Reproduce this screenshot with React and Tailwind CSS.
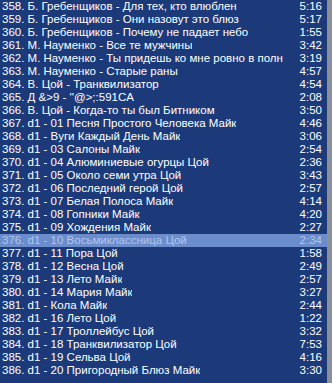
import React from "react";

const tracks = [
  ["358. Б. Гребенщиков - Для тех, кто влюблен", "5:16"],
  ["359. Б. Гребенщиков - Они назовут это блюз", "5:17"],
  ["360. Б. Гребенщиков - Почему не падает небо", "1:55"],
  ["361. М. Науменко - Все те мужчины", "3:42"],
  ["362. М. Науменко - Ты придешь ко мне ровно в полн", "3:19"],
  ["363. М. Науменко - Старые раны", "4:57"],
  ["364. В. Цой - Транквилизатор", "4:54"],
  ["365. Д &>9 - ''@>;:591CA", "2:08"],
  ["366. В. Цой - Когда-то ты был Битником", "3:50"],
  ["367. d1 - 01 Песня Простого Человека Майк", "4:46"],
  ["368. d1 - Вуги Каждый День Майк", "3:06"],
  ["369. d1 - 03 Салоны Майк", "2:54"],
  ["370. d1 - 04 Алюминиевые огурцы Цой", "2:36"],
  ["371. d1 - 05 Около семи утра Цой", "3:43"],
  ["372. d1 - 06 Последний герой Цой", "2:57"],
  ["373. d1 - 07 Белая Полоса Майк", "4:14"],
  ["374. d1 - 08 Гопники Майк", "4:20"],
  ["375. d1 - 09 Хождения Майк", "2:27"],
  ["376. d1 - 10 Восьмиклассница Цой", "2:34"],
  ["377. d1 - 11 Пора Цой", "1:58"],
  ["378. d1 - 12 Весна Цой", "2:49"],
  ["379. d1 - 13 Лето Майк", "2:57"],
  ["380. d1 - 14 Мария Майк", "3:27"],
  ["381. d1 - Кола Майк", "2:44"],
  ["382. d1 - 16 Лето Цой", "1:22"],
  ["383. d1 - 17 Троллейбус Цой", "3:32"],
  ["384. d1 - 18 Транквилизатор Цой", "7:53"],
  ["385. d1 - 19 Сельва Цой", "4:16"],
  ["386. d1 - 20 Пригородный Блюз Майк", "3:30"],
];

const selected = 18;

export default function App() {
  return (
    <div className="flex w-[332px] h-[383px] overflow-hidden bg-[#1c3a7a] font-['Liberation_Sans',Arial,sans-serif] text-[11.5px] leading-[13px]">
      <div className="flex flex-col flex-1">
        {tracks.map(([title, time], i) => (
          <div
            key={i}
            className={
              i === selected
                ? "flex justify-between h-[13px] pl-[2px] pr-[5px] bg-[#6b8dcb] text-[#b0c6ee]"
                : "flex justify-between h-[13px] pl-[2px] pr-[5px] text-white"
            }
          >
            <span className="whitespace-pre overflow-hidden">{title}</span>
            <span className="pl-2">{time}</span>
          </div>
        ))}
      </div>
      <div className="w-[5px] bg-[#8a8f99]" />
    </div>
  );
}
